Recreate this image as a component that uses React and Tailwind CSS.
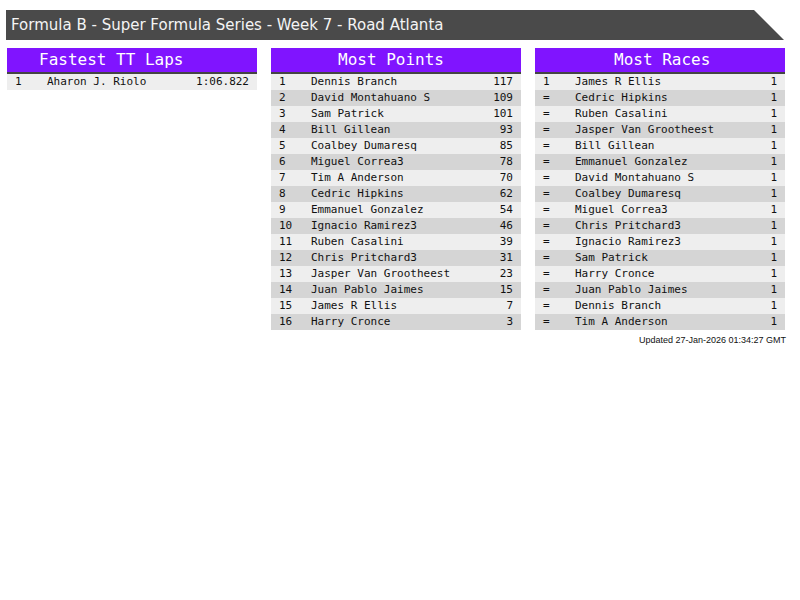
const fastest = [['1', 'Aharon J. Riolo', '1:06.822']];

const points = [
  ['1', 'Dennis Branch', '117'],
  ['2', 'David Montahuano S', '109'],
  ['3', 'Sam Patrick', '101'],
  ['4', 'Bill Gillean', '93'],
  ['5', 'Coalbey Dumaresq', '85'],
  ['6', 'Miguel Correa3', '78'],
  ['7', 'Tim A Anderson', '70'],
  ['8', 'Cedric Hipkins', '62'],
  ['9', 'Emmanuel Gonzalez', '54'],
  ['10', 'Ignacio Ramirez3', '46'],
  ['11', 'Ruben Casalini', '39'],
  ['12', 'Chris Pritchard3', '31'],
  ['13', 'Jasper Van Grootheest', '23'],
  ['14', 'Juan Pablo Jaimes', '15'],
  ['15', 'James R Ellis', '7'],
  ['16', 'Harry Cronce', '3'],
];

const races = [
  ['1', 'James R Ellis', '1'],
  ['=', 'Cedric Hipkins', '1'],
  ['=', 'Ruben Casalini', '1'],
  ['=', 'Jasper Van Grootheest', '1'],
  ['=', 'Bill Gillean', '1'],
  ['=', 'Emmanuel Gonzalez', '1'],
  ['=', 'David Montahuano S', '1'],
  ['=', 'Coalbey Dumaresq', '1'],
  ['=', 'Miguel Correa3', '1'],
  ['=', 'Chris Pritchard3', '1'],
  ['=', 'Ignacio Ramirez3', '1'],
  ['=', 'Sam Patrick', '1'],
  ['=', 'Harry Cronce', '1'],
  ['=', 'Juan Pablo Jaimes', '1'],
  ['=', 'Dennis Branch', '1'],
  ['=', 'Tim A Anderson', '1'],
];

function Board({ title, rows, pad }) {
  return (
    <div className="w-[250px]">
      <div className={`flex h-[26px] items-center border-b-2 border-[#444444] bg-[#8014ff] pb-[1px] text-[16px] text-white ${pad}`}>
        {title}
      </div>
      {rows.map((r, i) => (
        <div
          key={i}
          className={`flex h-[16px] items-center px-[8px] text-[11px] text-[#111111] ${i % 2 === 0 ? 'bg-[#eeeeee]' : 'bg-[#d5d5d5]'}`}
        >
          <span className="w-[32px]">{r[0]}</span>
          <span className="flex-1">{r[1]}</span>
          <span>{r[2]}</span>
        </div>
      ))}
    </div>
  );
}

export default function App() {
  return (
    <div className="h-[600px] w-[800px] bg-white pl-[6px] pt-[10px] font-['DejaVu_Sans_Mono',monospace]">
      <div className="flex h-[30px] w-[778px] items-center bg-[#4a4a4a] pl-[5px] font-['DejaVu_Sans',sans-serif] text-[15px] text-[#f4f4f4] [clip-path:polygon(0_0,748px_0,100%_100%,0_100%)]">
        Formula B - Super Formula Series - Week 7 - Road Atlanta
      </div>
      <div className="mt-[8px] flex gap-[14px] pl-[1px]">
        <Board title="Fastest TT Laps" rows={fastest} pad="pl-[32px]" />
        <Board title="Most Points" rows={points} pad="pl-[67px]" />
        <div className="flex flex-col">
          <Board title="Most Races" rows={races} pad="pl-[79px]" />
          <div className="mr-[-1px] mt-[4px] text-right font-['Liberation_Sans_Narrow','Liberation_Sans',sans-serif] text-[9px] text-[#111111]">
            Updated 27-Jan-2026 01:34:27 GMT
          </div>
        </div>
      </div>
    </div>
  );
}
